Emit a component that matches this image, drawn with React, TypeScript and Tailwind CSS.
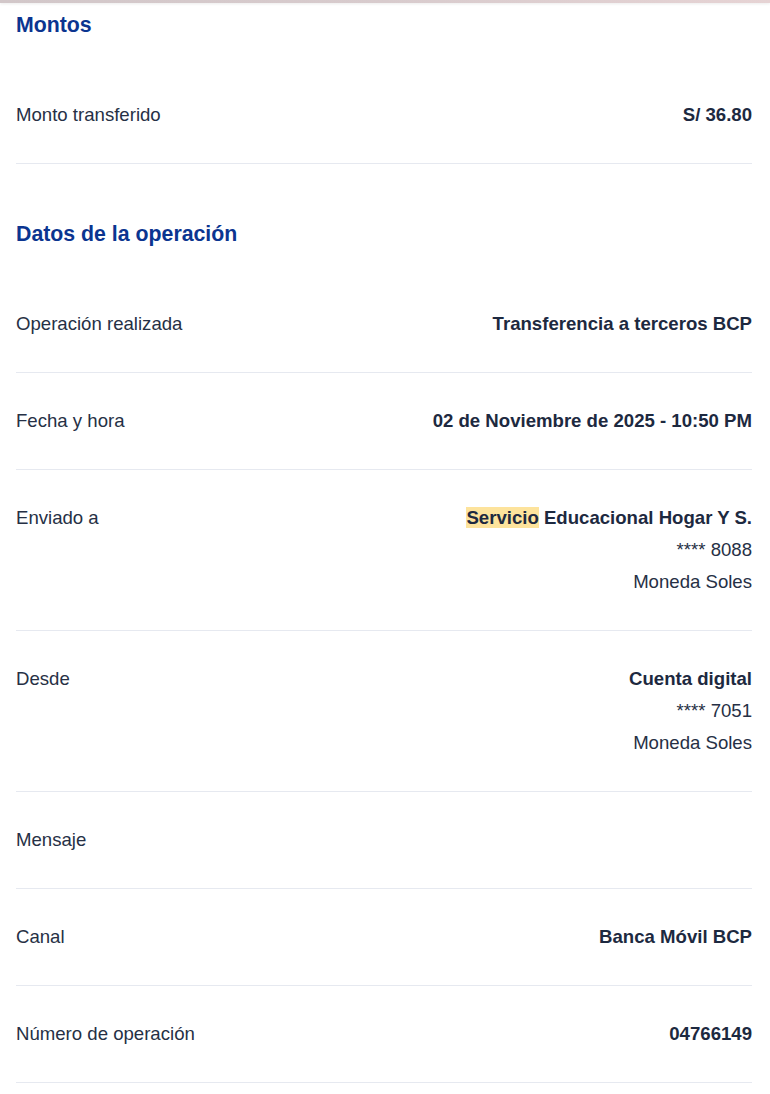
import React from 'react';

type Row = {
  label: string;
  lines: React.ReactNode[];
  boldFirst?: boolean;
};

const DATOS: Row[] = [
  { label: 'Operación realizada', lines: ['Transferencia a terceros BCP'], boldFirst: true },
  { label: 'Fecha y hora', lines: ['02 de Noviembre de 2025 - 10:50 PM'], boldFirst: true },
  {
    label: 'Enviado a',
    lines: [
      <>
        <span className="bg-[#fde39c]">Servicio</span> Educacional Hogar Y S.
      </>,
      '**** 8088',
      'Moneda Soles',
    ],
    boldFirst: true,
  },
  { label: 'Desde', lines: ['Cuenta digital', '**** 7051', 'Moneda Soles'], boldFirst: true },
  { label: 'Mensaje', lines: [] },
  { label: 'Canal', lines: ['Banca Móvil BCP'], boldFirst: true },
  { label: 'Número de operación', lines: ['04766149'], boldFirst: true },
];

const DetailRow: React.FC<{ row: Row }> = ({ row }) => (
  <div className="flex justify-between items-start py-8 border-b border-[#e6e9f0] leading-[32px] min-h-[97px]">
    <span className="text-[#263045]">{row.label}</span>
    <div className="flex flex-col items-end text-right">
      {row.lines.map((line, i) => (
        <span
          key={i}
          className={i === 0 && row.boldFirst ? 'font-bold text-[#1d2940]' : 'text-[#263045]'}
        >
          {line}
        </span>
      ))}
    </div>
  </div>
);

const App: React.FC = () => {
  return (
    <div
      className="min-h-screen bg-white text-[18.6px]"
      style={{ fontFamily: '"Liberation Sans", Arial, sans-serif' }}
    >
      <div className="h-[3px] bg-gradient-to-r from-[#d2c7c9] via-[#d8cbcd] to-[#e6d3d4] shadow-[0_1px_3px_rgba(0,0,0,0.08)]" />

      <div className="pl-4 pr-[18px]">
        <h2 className="pt-[8px] text-[21.3px] leading-[28px] font-bold text-[#0b3590]">Montos</h2>
        <div className="mt-[28px]">
          <DetailRow row={{ label: 'Monto transferido', lines: ['S/ 36.80'], boldFirst: true }} />
        </div>

        <h2 className="mt-[56px] text-[21.3px] leading-[28px] font-bold text-[#0b3590]">
          Datos de la operación
        </h2>
        <div className="mt-[28px]">
          {DATOS.map((row) => (
            <DetailRow key={row.label} row={row} />
          ))}
        </div>
      </div>
    </div>
  );
};

export default App;
